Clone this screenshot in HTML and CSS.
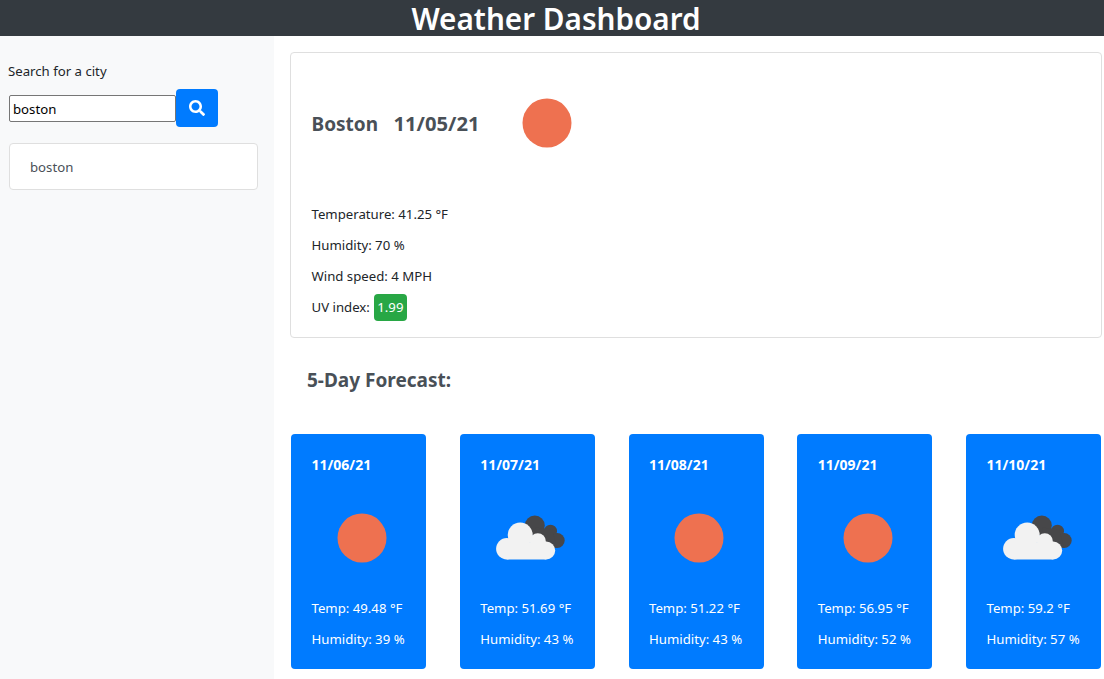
FILE: index.html
```html
<!DOCTYPE html>
<html lang="en">
<head>
<meta charset="utf-8">
<title>Weather Dashboard</title>
<link rel="stylesheet" href="styles.css">
</head>
<body>
<svg class="defs" width="0" height="0" aria-hidden="true">
  <defs>
    <g id="sun"><circle cx="50" cy="50" r="24.500" fill="#ee7150"/></g>
    <g id="clouds" transform="translate(0 -0.500)">
      <g fill="#474749">
        <circle cx="54.800" cy="38" r="10"/>
        <circle cx="70.500" cy="43.700" r="6.500"/>
        <circle cx="77.200" cy="53" r="7.500"/>
        <path d="M55 40 72 42 77 60 60 62z"/>
      </g>
      <g fill="#f2f2f2">
        <circle cx="26.800" cy="61.300" r="10.700"/>
        <circle cx="40.200" cy="47.500" r="12.500"/>
        <circle cx="57.800" cy="53.700" r="8"/>
        <circle cx="66.200" cy="63" r="9"/>
        <path d="M26.800 55H66.200V72H26.800z"/>
      </g>
    </g>
  </defs>
</svg>
<header class="topbar"><h1 class="title">Weather Dashboard</h1></header>
<div class="layout">
  <aside class="sidebar">
    <label class="search-label" for="city">Search for a city</label>
    <form class="search-row">
      <input class="search-input" id="city" type="text" value="boston">
      <button class="search-btn" type="button" aria-label="Search">
        <svg class="search-icon" viewBox="0 0 512 512"><path fill="#fff" d="M505 442.700 405.300 343c-4.500-4.500-10.600-7-17-7H372c27.600-35.300 44-79.700 44-128C416 93.100 322.900 0 208 0S0 93.100 0 208s93.100 208 208 208c48.300 0 92.700-16.400 128-44v16.300c0 6.400 2.500 12.500 7 17l99.700 99.700c9.400 9.400 24.600 9.400 33.900 0l28.300-28.300c9.400-9.400 9.400-24.600.100-34zM208 336c-70.700 0-128-57.200-128-128 0-70.700 57.200-128 128-128 70.700 0 128 57.200 128 128 0 70.700-57.200 128-128 128z"/></svg>
      </button>
    </form>
    <div class="history-item">boston</div>
  </aside>
  <main class="content">
    <section class="current">
      <div class="current-head">
        <h2 class="city-title"><span class="city-name">Boston</span><span class="city-date">11/05/21</span></h2>
        <svg class="weather-icon" viewBox="0 0 100 100"><use href="#sun"/></svg>
      </div>
      <p class="line">Temperature: 41.25 °F</p>
      <p class="line">Humidity: 70 %</p>
      <p class="line">Wind speed: 4 MPH</p>
      <p class="line line-last">UV index: <span class="uv">1.99</span></p>
    </section>
    <h2 class="forecast-title">5-Day Forecast:</h2>
    <section class="forecast">
      <article class="day">
        <h3 class="day-date">11/06/21</h3>
        <svg class="weather-icon" viewBox="0 0 100 100"><use href="#sun"/></svg>
        <p class="line">Temp: 49.48 °F</p>
        <p class="line">Humidity: 39 %</p>
      </article>
      <article class="day">
        <h3 class="day-date">11/07/21</h3>
        <svg class="weather-icon" viewBox="0 0 100 100"><use href="#clouds"/></svg>
        <p class="line">Temp: 51.69 °F</p>
        <p class="line">Humidity: 43 %</p>
      </article>
      <article class="day">
        <h3 class="day-date">11/08/21</h3>
        <svg class="weather-icon" viewBox="0 0 100 100"><use href="#sun"/></svg>
        <p class="line">Temp: 51.22 °F</p>
        <p class="line">Humidity: 43 %</p>
      </article>
      <article class="day">
        <h3 class="day-date">11/09/21</h3>
        <svg class="weather-icon" viewBox="0 0 100 100"><use href="#sun"/></svg>
        <p class="line">Temp: 56.95 °F</p>
        <p class="line">Humidity: 52 %</p>
      </article>
      <article class="day">
        <h3 class="day-date">11/10/21</h3>
        <svg class="weather-icon" viewBox="0 0 100 100"><use href="#clouds"/></svg>
        <p class="line">Temp: 59.2 °F</p>
        <p class="line">Humidity: 57 %</p>
      </article>
    </section>
  </main>
</div>
</body>
</html>
```
FILE: styles.css
```css
* { box-sizing: border-box; }
html, body { margin: 0; height: 100%; overflow: hidden; }
body {
  font-family: "Noto Sans", "Open Sans", sans-serif;
  font-size: 13.200px;
  line-height: 21px;
  color: #212529;
  background: #fff;
}
.defs { display: block; }
.topbar { height: 36px; background: #343a40; text-align: center; padding: 2px 0 0 8px; }
.title { margin: 0; font-size: 29.700px; line-height: 34px; font-weight: 600; color: #fff; }
.layout { display: flex; height: 643px; }
.sidebar { flex: 0 0 274px; background: #f8f9fa; padding: 25px 16px 0 8px; }
.search-label { display: block; margin-bottom: 7px; }
.search-row { display: flex; align-items: center; margin-left: 1px; }
.search-input {
  width: 167px; height: 27px; padding: 2px 3px 0;
  border: 1px solid #767676; border-radius: 2px;
  font: inherit; color: #000; background: #fff;
}
.search-btn {
  width: 42px; height: 38px; padding: 0; border: 0; border-radius: 4px;
  background: #007bff; display: flex; align-items: center; justify-content: center;
}
.search-icon { width: 16px; height: 16px; display: block; }
.history-item {
  margin: 16px 0 0 1px; height: 47px; padding: 13px 20px 0;
  background: #fff; border: 1px solid #dfdfdf; border-radius: 4px; color: #495057;
}
.content { flex: 1; min-width: 0; padding: 16px 2px 0 16px; }
.current { height: 286px; padding: 20px 20px 0 20.500px; border: 1px solid #dfdfdf; border-radius: 4px; }
.current-head { display: flex; align-items: center; height: 100px; margin: 0 0 31px; }
.city-title { margin: 0; width: 185px; display: flex; align-items: baseline; font-size: 19px; line-height: 24px; font-weight: 700; color: #495057; }
.city-name { width: 82px; }
.city-date { font-size: 20.200px; }
.weather-icon { display: block; flex: none; width: 100px; height: 100px; }
.line { margin: 0 0 10px; }
.line-last { margin: 0; }
.uv { display: inline-block; margin: -4px 0 -2px 1px; padding: 3px 4px 3px 3px; border-radius: 4px; background: #28a745; color: #fff; }
.forecast-title { margin: 30px 0 42px 17px; font-size: 19px; line-height: 24px; font-weight: 700; color: #495057; }
.forecast { display: flex; justify-content: space-between; padding: 0 1px; }
.day { width: 135px; height: 235px; padding: 20px 0 0 20.500px; background: #007bff; border-radius: 4px; color: #fff; }
.day-date { margin: 0 0 12.500px; font-size: 14px; line-height: 21px; font-weight: 700; }
.day .weather-icon { margin-bottom: 10.500px; }
```
